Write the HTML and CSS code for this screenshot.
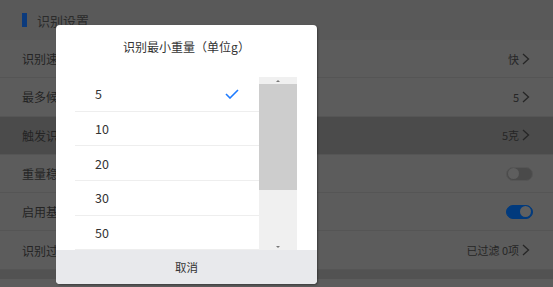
FILE: index.html
```html
<!DOCTYPE html>
<html>
<head>
    <meta charset="utf-8">
    <title>识别设置</title>
    <link rel="stylesheet" href="styles.css">
</head>
<body>
    <div class="page">
        <div class="section-head">
            <span class="bar"></span>
            <span class="section-title">识别设置</span>
        </div>
        <div class="row">
            <span class="label">识别速度</span>
            <span class="value">快<svg class="chev" viewBox="0 0 8 12"><polyline points="1,1 6.5,6 1,11"/></svg></span>
        </div>
        <div class="row">
            <span class="label">最多候选</span>
            <span class="value">5<svg class="chev" viewBox="0 0 8 12"><polyline points="1,1 6.5,6 1,11"/></svg></span>
        </div>
        <div class="row active">
            <span class="label">触发识别</span>
            <span class="value">5克<svg class="chev" viewBox="0 0 8 12"><polyline points="1,1 6.5,6 1,11"/></svg></span>
        </div>
        <div class="row">
            <span class="label">重量稳定</span>
            <span class="toggle"><span class="knob"></span></span>
        </div>
        <div class="row">
            <span class="label">启用基础</span>
            <span class="toggle on"><span class="knob"></span></span>
        </div>
        <div class="row">
            <span class="label">识别过滤</span>
            <span class="value">已过滤 0项<svg class="chev" viewBox="0 0 8 12"><polyline points="1,1 6.5,6 1,11"/></svg></span>
        </div>
        <div class="page-foot"></div>
    </div>

    <div class="modal">
        <div class="modal-title">识别最小重量（单位g）</div>
        <div class="modal-body">
            <div class="list">
                <div class="item selected">5<svg class="check" viewBox="0 0 14 10"><polyline points="1,5 5,9 13,1"/></svg></div>
                <div class="item">10</div>
                <div class="item">20</div>
                <div class="item">30</div>
                <div class="item">50</div>
            </div>
            <div class="scrollbar">
                <div class="sb-btn"><span class="arrow-up"></span></div>
                <div class="sb-thumb"></div>
                <div class="sb-track"><span class="arrow-down"></span></div>
            </div>
        </div>
        <div class="modal-foot">取消</div>
    </div>
</body>
</html>
```

FILE: styles.css
```css
body {
    margin: 0;
    font-family: "Noto Sans CJK SC", "Noto Sans", sans-serif;
    background-color: #5b5b5b;
    overflow: hidden;
}

.page {
    width: 553px;
    height: 287px;
    background-color: #5c5c5c;
}

.section-head {
    height: 40px;
    display: flex;
    align-items: center;
    padding-left: 22px;
    background-color: #595959;
    box-sizing: border-box;
}

.bar {
    width: 5px;
    height: 14px;
    background-color: #0b3a7c;
}

.section-title {
    margin-left: 10px;
    font-size: 13px;
    color: #2b2b2b;
}

.row {
    height: 38.3px;
    display: flex;
    align-items: center;
    justify-content: space-between;
    padding: 0 23px 0 22px;
    border-bottom: 1px solid #555555;
    box-sizing: border-box;
}

.row.active {
    background-color: #4b4b4b;
}

.label {
    font-size: 12px;
    color: #242424;
}

.value {
    display: flex;
    align-items: center;
    font-size: 11px;
    color: #262626;
}

.chev {
    width: 8px;
    height: 12px;
    margin-left: 3px;
    fill: none;
    stroke: #262626;
    stroke-width: 1.3;
}

.toggle {
    width: 27px;
    height: 14px;
    border-radius: 7px;
    background-color: #4a4a4a;
    border: 1px solid #555555;
    box-sizing: border-box;
    display: flex;
    align-items: center;
    padding: 0 1px;
    margin-right: -3px;
}

.toggle .knob {
    width: 11px;
    height: 11px;
    border-radius: 50%;
    background-color: #5e5e5e;
}

.toggle.on {
    background-color: #013a7d;
    border-color: #013a7d;
    justify-content: flex-end;
}

.toggle.on .knob {
    background-color: #606060;
}

.page-foot {
    height: 9px;
    background-color: #525252;
}

.modal {
    position: absolute;
    left: 56px;
    top: 25px;
    width: 261px;
    height: 259px;
    background-color: #ffffff;
    border-radius: 4px;
    box-shadow: 1px 1px 2px rgba(0, 0, 0, 0.35);
    display: flex;
    flex-direction: column;
    overflow: hidden;
}

.modal-title {
    height: 52px;
    padding-top: 13px;
    box-sizing: border-box;
    text-align: center;
    font-size: 12px;
    line-height: 18px;
    color: #333333;
}

.modal-body {
    height: 173px;
    display: flex;
    padding: 0 20px 0 19px;
}

.list {
    flex: 1;
    overflow: hidden;
}

.item {
    height: 34.7px;
    display: flex;
    align-items: center;
    justify-content: space-between;
    padding: 0 20px 0 20px;
    border-bottom: 1px solid #eeeeee;
    box-sizing: border-box;
    font-size: 12.5px;
    color: #333333;
}

.check {
    width: 14px;
    height: 10px;
    fill: none;
    stroke: #1e7bff;
    stroke-width: 1.6;
}

.scrollbar {
    width: 38px;
    display: flex;
    flex-direction: column;
    background-color: #f0f0f0;
}

.sb-btn {
    height: 7px;
    display: flex;
    align-items: center;
    justify-content: center;
}

.arrow-up {
    width: 0;
    height: 0;
    border-left: 2px solid transparent;
    border-right: 2px solid transparent;
    border-bottom: 2px solid #777777;
}

.sb-thumb {
    height: 106px;
    background-color: #cdcdcd;
}

.sb-track {
    flex: 1;
    display: flex;
    align-items: flex-end;
    justify-content: center;
    padding-bottom: 2px;
}

.arrow-down {
    width: 0;
    height: 0;
    border-left: 2px solid transparent;
    border-right: 2px solid transparent;
    border-top: 2px solid #777777;
}

.modal-foot {
    flex: 1;
    background-color: #e8e9ec;
    display: flex;
    align-items: center;
    justify-content: center;
    font-size: 11.5px;
    color: #333333;
}
```
